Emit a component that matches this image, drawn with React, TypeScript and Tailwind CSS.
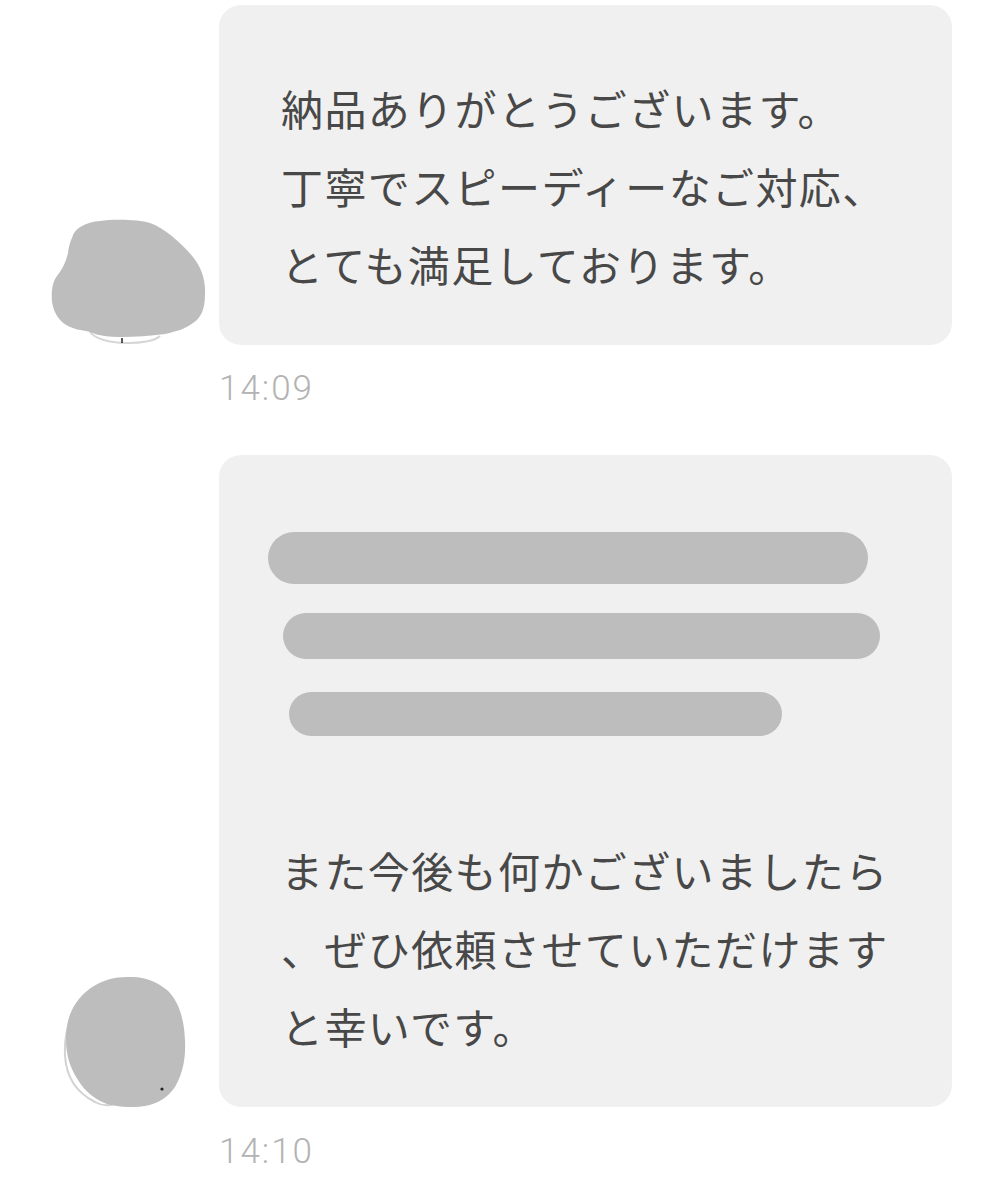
import React from "react";

const TEXT_FONT = {
    fontFamily: '"Noto Sans CJK JP", "Noto Sans", sans-serif',
};

// scribbled-over avatar, drawn in page coordinates
const AvatarOne: React.FC = () => (
    <svg
        width="170"
        height="135"
        viewBox="40 210 170 135"
        className="ml-[40px] block"
    >
        <path
            d="M90 332 C100 346 150 346 160 336"
            fill="none"
            stroke="#d6d6d6"
            strokeWidth="2"
        />
        <line x1="122" y1="338" x2="122" y2="343" stroke="#222" strokeWidth="1.5" />
        <path
            d="M72 238 C74 228 86 222 100 221 C112 219 138 219 150 223 C165 228 182 244 193 257 C201 267 206 280 205 295 C205 310 200 319 193 323 C185 329 178 331 165 334 C150 336 135 337 122 337 C110 337 98 336 90 332 C82 330 76 330 68 326 C60 322 54 314 52 302 C51 290 53 281 57 276 C62 270 66 262 68 253 C69 246 70 242 72 238 Z"
            fill="#bdbdbd"
        />
    </svg>
);

const AvatarTwo: React.FC = () => (
    <svg
        width="170"
        height="142"
        viewBox="40 965 170 142"
        className="ml-[40px] block"
    >
        <path
            d="M82 1000 C70 1015 64 1035 65 1055 C66 1075 75 1092 95 1102 C102 1106 108 1106 114 1104"
            fill="none"
            stroke="#d2d2d2"
            strokeWidth="2"
        />
        <path
            d="M133 977 C145 977 157 982 167 990 C178 1000 184 1017 185 1040 C186 1060 182 1075 175 1087 C168 1097 158 1104 145 1106 C132 1108 118 1107 107 1104 C96 1100 85 1092 78 1080 C70 1068 66 1055 66 1040 C66 1025 69 1013 76 1003 C84 991 96 983 110 979 C118 977 126 977 133 977 Z"
            fill="#bdbdbd"
        />
        <circle cx="162" cy="1089" r="1.6" fill="#222" />
    </svg>
);

const Bubble: React.FC<{ children: React.ReactNode }> = ({ children }) => (
    <div
        className="w-[733px] shrink-0 rounded-[22px] bg-[#f0f0f0] pl-[62px] pr-[20px] pt-[64px] pb-[42px] text-[42px] leading-[78px] tracking-[1.4px] text-[#484848]"
        style={TEXT_FONT}
    >
        {children}
    </div>
);

const Line: React.FC<{ children?: React.ReactNode }> = ({ children }) => (
    <div className="h-[78px] whitespace-nowrap">{children}</div>
);

const Redacted: React.FC<{ className: string }> = ({ className }) => (
    <div className="flex h-[78px] items-center">
        <div className={`rounded-full bg-[#bdbdbd] ${className}`} />
    </div>
);

const Time: React.FC<{ value: string; className?: string }> = ({
    value,
    className,
}) => (
    <div
        className={`pl-[219px] text-[35px] leading-[40px] font-light tracking-[2px] text-[#b3b3b3] ${className ?? ""}`}
        style={{ fontFamily: 'Roboto, "Liberation Sans", sans-serif' }}
    >
        {value}
    </div>
);

export default function App() {
    return (
        <div className="min-h-[1200px] w-full bg-white pt-[5px]">
            {/* first message */}
            <div className="flex items-end">
                <div className="w-[219px] shrink-0">
                    <AvatarOne />
                </div>
                <Bubble>
                    <Line>納品ありがとうございます。</Line>
                    <Line>丁寧でスピーディーなご対応、</Line>
                    <Line>とても満足しております。</Line>
                </Bubble>
            </div>
            <Time value="14:09" className="mt-[24px]" />

            {/* second message */}
            <div className="mt-[46px] flex items-end">
                <div className="w-[219px] shrink-0">
                    <AvatarTwo />
                </div>
                <Bubble>
                    <Redacted className="-ml-[13px] h-[52px] w-[600px]" />
                    <Redacted className="ml-[2px] h-[46px] w-[597px]" />
                    <Redacted className="ml-[8px] h-[44px] w-[493px]" />
                    <Line />
                    <Line>また今後も何かございましたら</Line>
                    <Line>、ぜひ依頼させていただけます</Line>
                    <Line>と幸いです。</Line>
                </Bubble>
            </div>
            <Time value="14:10" className="mt-[25px]" />
        </div>
    );
}
